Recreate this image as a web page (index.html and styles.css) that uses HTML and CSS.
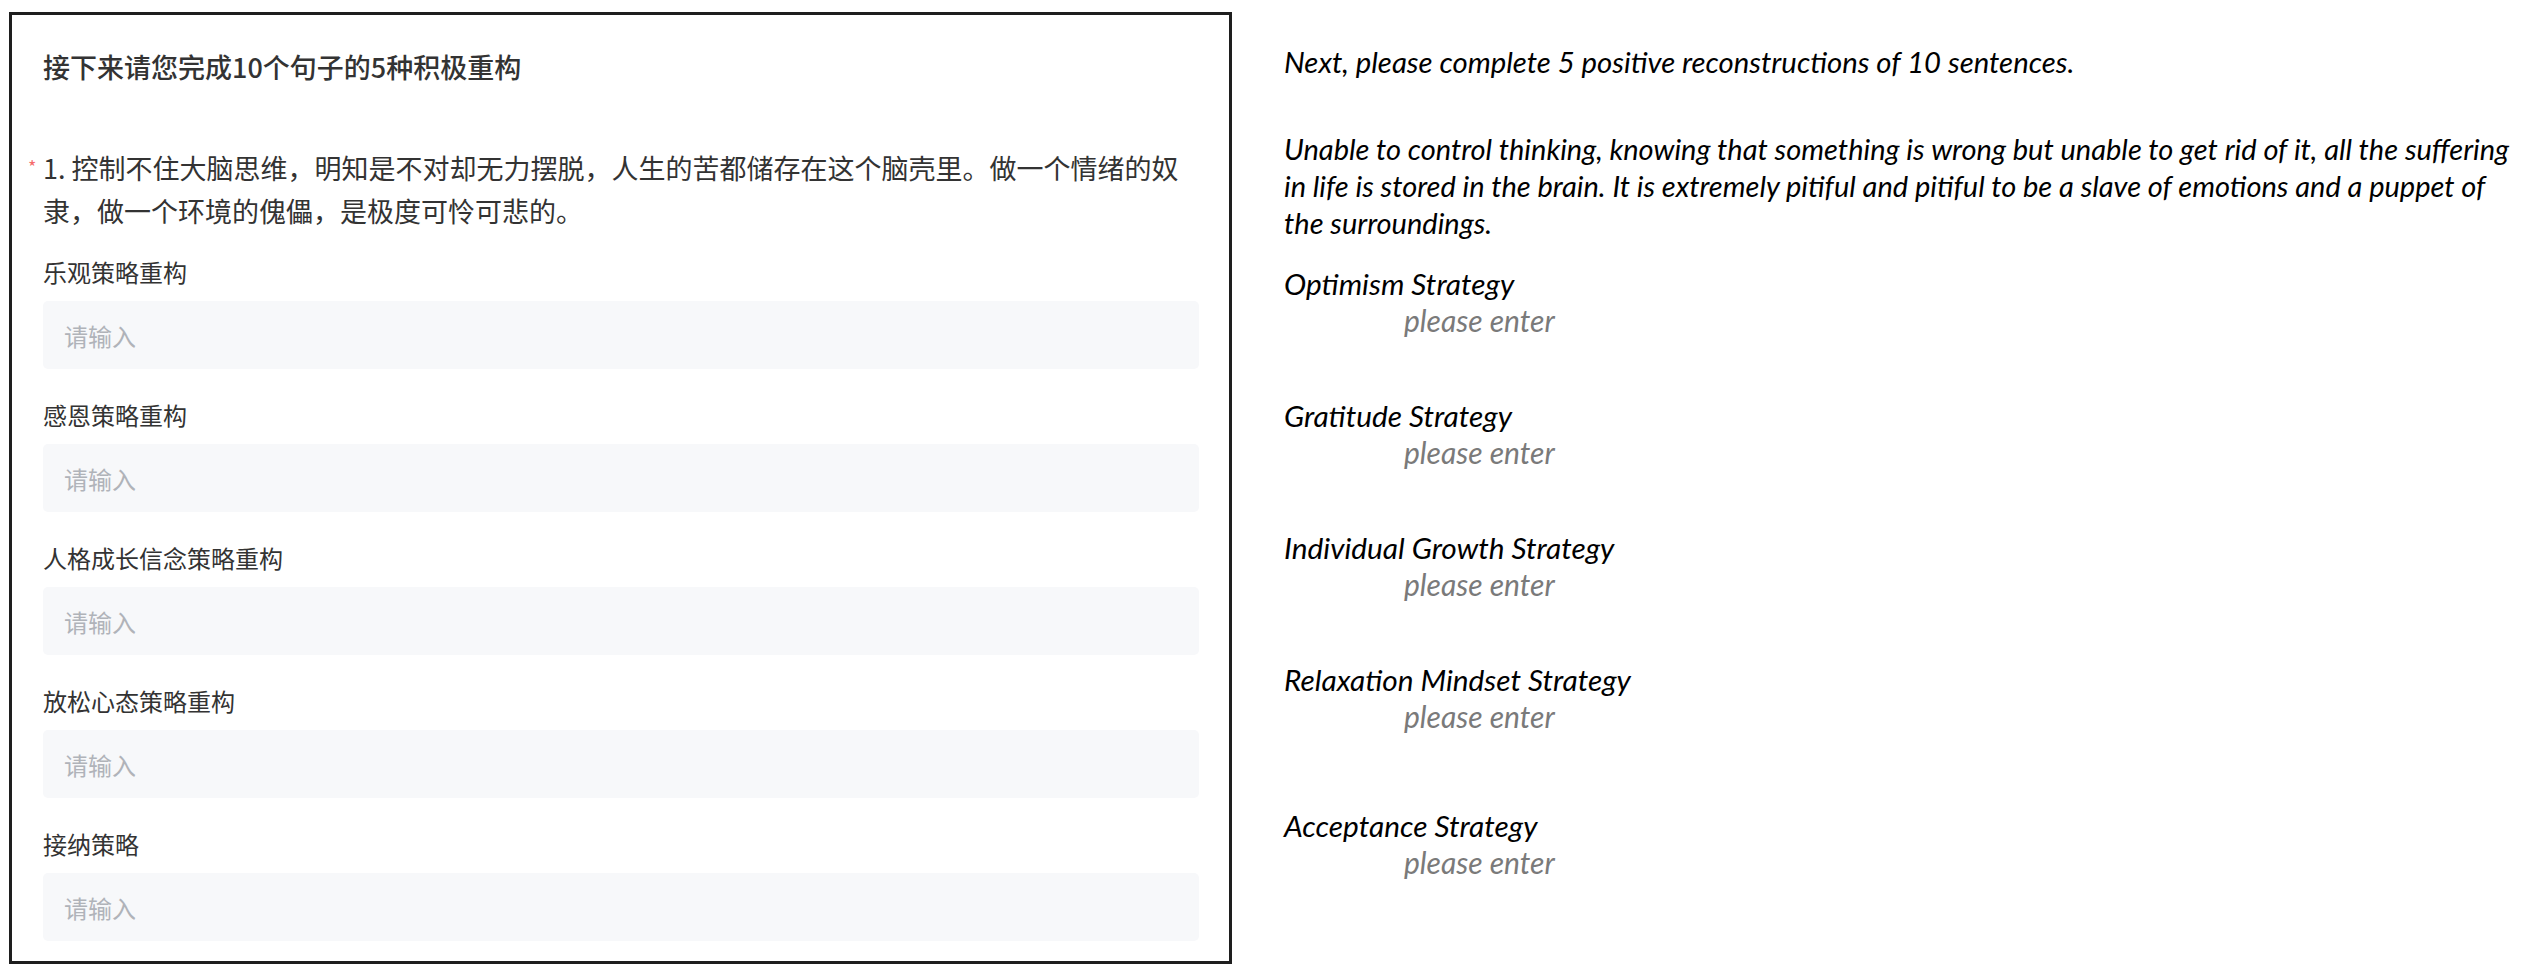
FILE: index.html
```html
<!DOCTYPE html>
<html lang="zh-CN">
<head>
<meta charset="utf-8">
<title>积极重构</title>
<link rel="stylesheet" href="styles.css">
</head>
<body>
<div class="page">
  <section class="form-panel">
    <h1 class="form-title">接下来请您完成10个句子的5种积极重构</h1>
    <div class="question">
      <span class="req">*</span>
      <p class="q-text">1. 控制不住大脑思维，明知是不对却无力摆脱，人生的苦都储存在这个脑壳里。做一个情绪的奴隶，做一个环境的傀儡，是极度可怜可悲的。</p>
    </div>
    <div class="field">
      <div class="field-label">乐观策略重构</div>
      <div class="field-input">请输入</div>
    </div>
    <div class="field">
      <div class="field-label">感恩策略重构</div>
      <div class="field-input">请输入</div>
    </div>
    <div class="field">
      <div class="field-label">人格成长信念策略重构</div>
      <div class="field-input">请输入</div>
    </div>
    <div class="field">
      <div class="field-label">放松心态策略重构</div>
      <div class="field-input">请输入</div>
    </div>
    <div class="field">
      <div class="field-label">接纳策略</div>
      <div class="field-input">请输入</div>
    </div>
  </section>

  <section class="translation">
    <p class="tr-title">Next, please complete 5 positive reconstructions of 10 sentences.</p>
    <p class="tr-question">Unable to control thinking, knowing that something is wrong but unable to get rid of it, all the suffering<br>in life is stored in the brain. It is extremely pitiful and pitiful to be a slave of emotions and a puppet of<br>the surroundings.</p>
    <div class="tr-field">
      <div class="tr-label">Optimism Strategy</div>
      <div class="tr-input">please enter</div>
    </div>
    <div class="tr-field">
      <div class="tr-label">Gratitude Strategy</div>
      <div class="tr-input">please enter</div>
    </div>
    <div class="tr-field">
      <div class="tr-label">Individual Growth Strategy</div>
      <div class="tr-input">please enter</div>
    </div>
    <div class="tr-field">
      <div class="tr-label">Relaxation Mindset Strategy</div>
      <div class="tr-input">please enter</div>
    </div>
    <div class="tr-field tr-last">
      <div class="tr-label">Acceptance Strategy</div>
      <div class="tr-input">please enter</div>
    </div>
  </section>
</div>
</body>
</html>
```

FILE: styles.css
```css
html, body {
  margin: 0;
  padding: 0;
  background: #ffffff;
}

.page {
  display: flex;
  align-items: flex-start;
  padding: 12px 0 0 9px;
}

.form-panel {
  box-sizing: border-box;
  width: 1223px;
  height: 952px;
  border: 3px solid #1e1e1e;
  padding: 32px 30px 0 31px;
  font-family: "Noto Sans CJK SC", "Microsoft YaHei", sans-serif;
  color: #333333;
}

.form-title {
  margin: 0;
  font-size: 27px;
  line-height: 40px;
  font-weight: 500;
  color: #333333;
}

.question {
  display: flex;
  align-items: flex-start;
  margin: 59px 0 0 -15px;
}

.req {
  flex: 0 0 15px;
  padding-top: 11px;
  color: #f56c6c;
  font-size: 18px;
  line-height: 18px;
}

.q-text {
  flex: 1;
  margin: 0;
  font-size: 27px;
  line-height: 43px;
  color: #333333;
}

.field {
  display: flex;
  flex-direction: column;
  gap: 11px;
  margin-top: 28px;
}

.question + .field {
  margin-top: 22px;
}

.field-label {
  font-size: 24px;
  line-height: 36px;
  color: #333333;
}

.field-input {
  height: 68px;
  box-sizing: border-box;
  background: #f7f8fa;
  border-radius: 5px;
  padding-left: 21px;
  display: flex;
  align-items: center;
  font-size: 24px;
  color: #b0b3b9;
}

.translation {
  margin-left: 52px;
  padding-top: 31px;
  font-family: Lato, "Open Sans", sans-serif;
  font-style: italic;
  color: #000000;
  font-size: 29px;
}

.tr-title {
  margin: 0;
  line-height: 37px;
  font-size: 29.3px;
}

.tr-question {
  margin: 50px 0 0 0;
  line-height: 37px;
}

.tr-field {
  margin-top: 60px;
  line-height: 36px;
  font-size: 29.8px;
}

.tr-question + .tr-field {
  margin-top: 25px;
}

.tr-last {
  margin-top: 74px;
}

.tr-input {
  padding-left: 120px;
  color: #7a7a7a;
  font-size: 30px;
}
```
